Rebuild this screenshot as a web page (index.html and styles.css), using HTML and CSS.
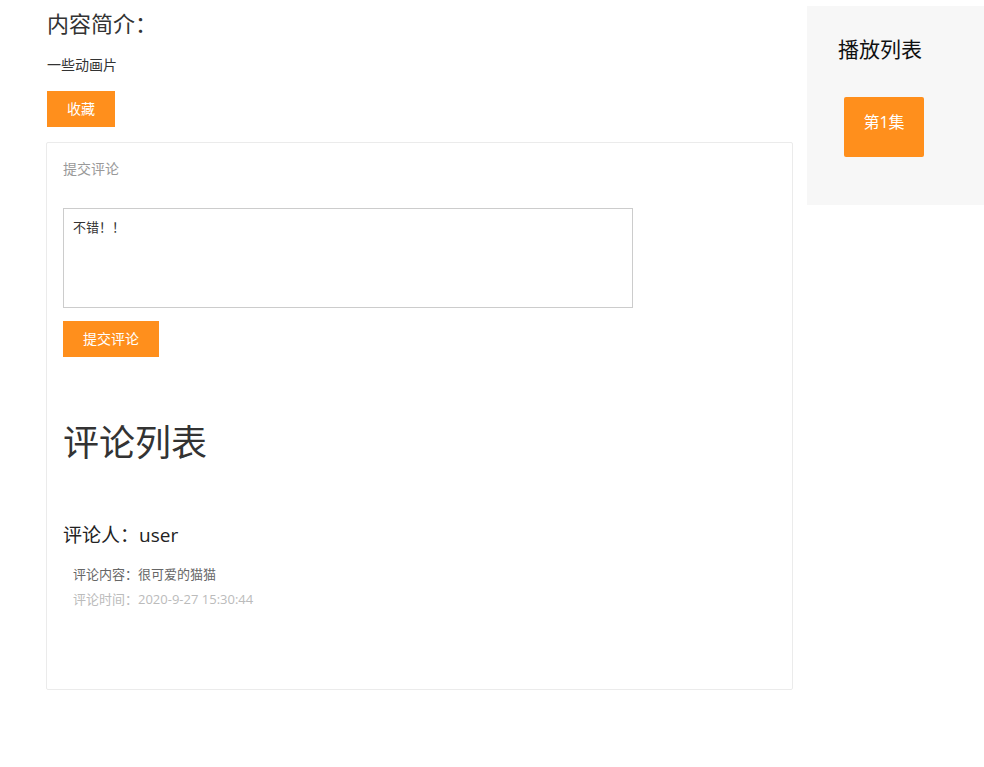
FILE: index.html
```html
<!DOCTYPE html>
<html lang="zh-CN">
<head>
    <meta charset="UTF-8">
    <meta name="viewport" content="width=device-width, initial-scale=1.0">
    <title>动画详情</title>
    <link rel="stylesheet" href="styles.css">
</head>
<body>
    <div class="container">
        <main class="content">
            <div class="intro">
                <h3 class="intro-title">内容简介：</h3>
                <p class="intro-text">一些动画片</p>
                <button type="button" class="btn">收藏</button>
            </div>

            <div class="comment-box">
                <form>
                    <label class="comment-label" for="comment">提交评论</label>
                    <textarea id="comment" name="comment">不错！！</textarea>
                    <button type="submit" class="btn">提交评论</button>
                </form>

                <h1 class="list-title">评论列表</h1>
                <div class="comment-item">
                    <h4 class="comment-user">评论人：user</h4>
                    <p class="comment-text">评论内容：很可爱的猫猫</p>
                    <p class="comment-time">评论时间：2020-9-27 15:30:44</p>
                </div>
            </div>
        </main>

        <aside class="playlist">
            <h3 class="playlist-title">播放列表</h3>
            <a class="episode" href="#">第1集</a>
        </aside>
    </div>
</body>
</html>
```

FILE: styles.css
```css
* {
    box-sizing: border-box;
}

body {
    margin: 0;
    font-family: "Open Sans", "Noto Sans CJK SC", sans-serif;
    font-size: 14px;
    line-height: 20px;
    color: #333;
    background: #fff;
}

h1, h3, h4, p {
    margin: 0;
    font-weight: normal;
}

.container {
    display: flex;
    align-items: flex-start;
    gap: 14px;
    padding: 6px 0 0 46px;
}

.content {
    flex: 1;
}

.intro {
    padding-left: 1px;
}

.intro-title {
    font-size: 22px;
    line-height: 34px;
}

.intro-text {
    margin: 15px 0 16px;
}

.btn {
    display: block;
    height: 36px;
    padding: 0 20px 2px;
    border: none;
    background: #ff8f1c;
    color: #fff;
    font-family: inherit;
    font-size: 14px;
    cursor: pointer;
}

.comment-box {
    margin-top: 15px;
    padding: 16px 16px 77px;
    border: 1px solid #ebebeb;
    border-radius: 2px;
}

.comment-label {
    display: block;
    color: #999;
}

.comment-box textarea {
    display: block;
    width: 80%;
    height: 100px;
    margin: 29px 0 13px;
    padding: 8px 9px;
    border: 1px solid #ccc;
    background: #fff;
    color: #333;
    font-family: inherit;
    font-size: 13px;
    line-height: 20px;
    resize: none;
}

.list-title {
    margin: 62px 0 54px;
    font-size: 36px;
    line-height: 48px;
}

.comment-user {
    font-size: 19px;
    line-height: 28px;
    color: #222;
}

.comment-text,
.comment-time {
    padding-left: 10px;
    font-size: 13px;
    line-height: 25px;
}

.comment-text {
    margin-top: 13px;
    color: #666;
}

.comment-time {
    color: #bbb;
}

.playlist {
    flex: 0 0 177px;
    padding: 28px 31px 48px;
    background: #f7f7f7;
}

.playlist-title {
    font-size: 21px;
    line-height: 30px;
    color: #111;
}

.episode {
    display: block;
    width: 80px;
    height: 60px;
    margin: 33px 0 0 6px;
    border-radius: 2px;
    background: #ff8f1c;
    color: #fff;
    font-size: 16px;
    line-height: 50px;
    text-align: center;
    text-decoration: none;
}
```
